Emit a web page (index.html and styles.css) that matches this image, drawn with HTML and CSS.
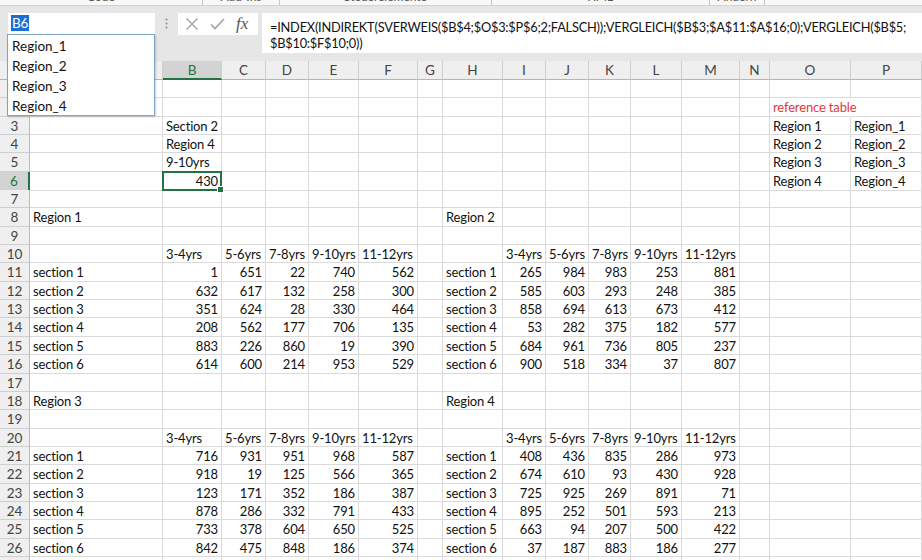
FILE: index.html
```html
<!DOCTYPE html>
<html>
<head>
<meta charset="utf-8">
<link rel="stylesheet" href="styles.css">
</head>
<body>
<div class="ribbon">
  <div class="grp g1">Code</div>
  <div class="grp g2">Add-Ins</div>
  <div class="grp g3">Steuerelemente</div>
  <div class="grp g4">XML</div>
  <div class="grp g5">Ändern</div>
</div>
<div class="fbar">
  <div class="namebox"><span class="sel">B6</span></div>
  <div class="dots"><svg width="3" height="11" viewBox="0 0 3 11"><circle cx="1.5" cy="1.5" r="1" fill="#8a8a8a"/><circle cx="1.5" cy="5.5" r="1" fill="#8a8a8a"/><circle cx="1.5" cy="9.5" r="1" fill="#8a8a8a"/></svg></div>
  <div class="tools">
    <svg class="ico" width="14" height="14" viewBox="0 0 14 14"><path d="M1.5 1.5 L12.5 12.5 M12.5 1.5 L1.5 12.5" stroke="#a3a3a3" stroke-width="1.4" fill="none"/></svg>
    <svg class="ico" width="15" height="12" viewBox="0 0 15 12"><path d="M1 6.5 L5 10.5 L14 1" stroke="#a3a3a3" stroke-width="1.6" fill="none"/></svg>
    <span class="fx">fx</span>
  </div>
  <div class="formula">=INDEX(INDIREKT(SVERWEIS($B$4;$O$3:$P$6;2;FALSCH));VERGLEICH($B$3;$A$11:$A$16;0);VERGLEICH($B$5;<br>$B$10:$F$10;0))</div>
</div>
<div class="sheet">
  <div class="r hd"><span></span><span>A</span><span class="hl">B</span><span>C</span><span>D</span><span>E</span><span>F</span><span>G</span><span>H</span><span>I</span><span>J</span><span>K</span><span>L</span><span>M</span><span>N</span><span>O</span><span>P</span></div>
  <div class="r"><span></span><span></span><span></span><span></span><span></span><span></span><span></span><span></span><span></span><span></span><span></span><span></span><span></span><span></span><span></span><span></span><span></span></div>
  <div class="r"><span></span><span></span><span></span><span></span><span></span><span></span><span></span><span></span><span></span><span></span><span></span><span></span><span></span><span></span><span></span><span class="ov red">reference table</span><span></span></div>
  <div class="r"><span>3</span><span></span><span>Section 2</span><span></span><span></span><span></span><span></span><span></span><span></span><span></span><span></span><span></span><span></span><span></span><span></span><span>Region 1</span><span>Region_1</span></div>
  <div class="r"><span>4</span><span></span><span>Region 4</span><span></span><span></span><span></span><span></span><span></span><span></span><span></span><span></span><span></span><span></span><span></span><span></span><span>Region 2</span><span>Region_2</span></div>
  <div class="r"><span>5</span><span></span><span>9-10yrs</span><span></span><span></span><span></span><span></span><span></span><span></span><span></span><span></span><span></span><span></span><span></span><span></span><span>Region 3</span><span>Region_3</span></div>
  <div class="r"><span class="rh">6</span><span></span><span class="n cur">430</span><span></span><span></span><span></span><span></span><span></span><span></span><span></span><span></span><span></span><span></span><span></span><span></span><span>Region 4</span><span>Region_4</span></div>
  <div class="r"><span>7</span><span></span><span></span><span></span><span></span><span></span><span></span><span></span><span></span><span></span><span></span><span></span><span></span><span></span><span></span><span></span><span></span></div>
  <div class="r"><span>8</span><span>Region 1</span><span></span><span></span><span></span><span></span><span></span><span></span><span>Region 2</span><span></span><span></span><span></span><span></span><span></span><span></span><span></span><span></span></div>
  <div class="r"><span>9</span><span></span><span></span><span></span><span></span><span></span><span></span><span></span><span></span><span></span><span></span><span></span><span></span><span></span><span></span><span></span><span></span></div>
  <div class="r"><span>10</span><span></span><span>3-4yrs</span><span>5-6yrs</span><span>7-8yrs</span><span>9-10yrs</span><span>11-12yrs</span><span></span><span></span><span>3-4yrs</span><span>5-6yrs</span><span>7-8yrs</span><span>9-10yrs</span><span>11-12yrs</span><span></span><span></span><span></span></div>
  <div class="r"><span>11</span><span>section 1</span><span class="n">1</span><span class="n">651</span><span class="n">22</span><span class="n">740</span><span class="n">562</span><span></span><span>section 1</span><span class="n">265</span><span class="n">984</span><span class="n">983</span><span class="n">253</span><span class="n">881</span><span></span><span></span><span></span></div>
  <div class="r"><span>12</span><span>section 2</span><span class="n">632</span><span class="n">617</span><span class="n">132</span><span class="n">258</span><span class="n">300</span><span></span><span>section 2</span><span class="n">585</span><span class="n">603</span><span class="n">293</span><span class="n">248</span><span class="n">385</span><span></span><span></span><span></span></div>
  <div class="r"><span>13</span><span>section 3</span><span class="n">351</span><span class="n">624</span><span class="n">28</span><span class="n">330</span><span class="n">464</span><span></span><span>section 3</span><span class="n">858</span><span class="n">694</span><span class="n">613</span><span class="n">673</span><span class="n">412</span><span></span><span></span><span></span></div>
  <div class="r"><span>14</span><span>section 4</span><span class="n">208</span><span class="n">562</span><span class="n">177</span><span class="n">706</span><span class="n">135</span><span></span><span>section 4</span><span class="n">53</span><span class="n">282</span><span class="n">375</span><span class="n">182</span><span class="n">577</span><span></span><span></span><span></span></div>
  <div class="r"><span>15</span><span>section 5</span><span class="n">883</span><span class="n">226</span><span class="n">860</span><span class="n">19</span><span class="n">390</span><span></span><span>section 5</span><span class="n">684</span><span class="n">961</span><span class="n">736</span><span class="n">805</span><span class="n">237</span><span></span><span></span><span></span></div>
  <div class="r"><span>16</span><span>section 6</span><span class="n">614</span><span class="n">600</span><span class="n">214</span><span class="n">953</span><span class="n">529</span><span></span><span>section 6</span><span class="n">900</span><span class="n">518</span><span class="n">334</span><span class="n">37</span><span class="n">807</span><span></span><span></span><span></span></div>
  <div class="r"><span>17</span><span></span><span></span><span></span><span></span><span></span><span></span><span></span><span></span><span></span><span></span><span></span><span></span><span></span><span></span><span></span><span></span></div>
  <div class="r"><span>18</span><span>Region 3</span><span></span><span></span><span></span><span></span><span></span><span></span><span>Region 4</span><span></span><span></span><span></span><span></span><span></span><span></span><span></span><span></span></div>
  <div class="r"><span>19</span><span></span><span></span><span></span><span></span><span></span><span></span><span></span><span></span><span></span><span></span><span></span><span></span><span></span><span></span><span></span><span></span></div>
  <div class="r"><span>20</span><span></span><span>3-4yrs</span><span>5-6yrs</span><span>7-8yrs</span><span>9-10yrs</span><span>11-12yrs</span><span></span><span></span><span>3-4yrs</span><span>5-6yrs</span><span>7-8yrs</span><span>9-10yrs</span><span>11-12yrs</span><span></span><span></span><span></span></div>
  <div class="r"><span>21</span><span>section 1</span><span class="n">716</span><span class="n">931</span><span class="n">951</span><span class="n">968</span><span class="n">587</span><span></span><span>section 1</span><span class="n">408</span><span class="n">436</span><span class="n">835</span><span class="n">286</span><span class="n">973</span><span></span><span></span><span></span></div>
  <div class="r"><span>22</span><span>section 2</span><span class="n">918</span><span class="n">19</span><span class="n">125</span><span class="n">566</span><span class="n">365</span><span></span><span>section 2</span><span class="n">674</span><span class="n">610</span><span class="n">93</span><span class="n">430</span><span class="n">928</span><span></span><span></span><span></span></div>
  <div class="r"><span>23</span><span>section 3</span><span class="n">123</span><span class="n">171</span><span class="n">352</span><span class="n">186</span><span class="n">387</span><span></span><span>section 3</span><span class="n">725</span><span class="n">925</span><span class="n">269</span><span class="n">891</span><span class="n">71</span><span></span><span></span><span></span></div>
  <div class="r"><span>24</span><span>section 4</span><span class="n">878</span><span class="n">286</span><span class="n">332</span><span class="n">791</span><span class="n">433</span><span></span><span>section 4</span><span class="n">895</span><span class="n">252</span><span class="n">501</span><span class="n">593</span><span class="n">213</span><span></span><span></span><span></span></div>
  <div class="r"><span>25</span><span>section 5</span><span class="n">733</span><span class="n">378</span><span class="n">604</span><span class="n">650</span><span class="n">525</span><span></span><span>section 5</span><span class="n">663</span><span class="n">94</span><span class="n">207</span><span class="n">500</span><span class="n">422</span><span></span><span></span><span></span></div>
  <div class="r"><span>26</span><span>section 6</span><span class="n">842</span><span class="n">475</span><span class="n">848</span><span class="n">186</span><span class="n">374</span><span></span><span>section 6</span><span class="n">37</span><span class="n">187</span><span class="n">883</span><span class="n">186</span><span class="n">277</span><span></span><span></span><span></span></div>
  <div class="r"><span>27</span><span></span><span></span><span></span><span></span><span></span><span></span><span></span><span></span><span></span><span></span><span></span><span></span><span></span><span></span><span></span><span></span></div>
</div>
<div class="dropdown">
  <div class="item">Region_1</div>
  <div class="item">Region_2</div>
  <div class="item">Region_3</div>
  <div class="item">Region_4</div>
</div>
</body>
</html>
```

FILE: styles.css
```css
* { box-sizing: border-box; }
html, body { margin: 0; padding: 0; }
body {
  width: 922px;
  height: 560px;
  overflow: hidden;
  position: relative;
  background: #fff;
  color: #111;
  font-family: Lato, "Open Sans", sans-serif;
  font-size: 13px;
  letter-spacing: -0.15px;
}

/* ribbon group labels (cut off at top) */
.ribbon {
  height: 6px;
  overflow: hidden;
  display: flex;
  background: #f8f8f8;
  border-bottom: 1px solid #d2d2d2;
  font-size: 12px;
  color: #555;
  letter-spacing: 0;
}
.grp {
  height: 6px;
  text-align: center;
  line-height: 12px;
  border-right: 1px solid #c6c6c6;
  overflow: visible;
}
.grp::before { content: ""; display: block; margin-top: -9px; }
.g1 { width: 203px; }
.g2 { width: 77px; }
.g3 { width: 212px; }
.g4 { width: 218px; }
.g5 { width: 55px; }

/* formula bar */
.fbar {
  height: 55px;
  background: #e6e6e6;
  display: flex;
  align-items: flex-start;
  padding-top: 7px;
}
.namebox {
  margin-left: 8px;
  width: 147px;
  height: 21px;
  background: #fff;
  padding: 2px 3px;
  line-height: 17px;
  font-size: 13.5px;
}
.sel {
  background: #1a6fd1;
  color: #fff;
  padding: 0 1px;
}
.dots {
  width: 23px;
  height: 21px;
  display: flex;
  align-items: center;
  justify-content: center;
}
.tools {
  width: 80px;
  height: 22px;
  background: #fff;
  display: flex;
  align-items: center;
  padding-left: 7px;
  gap: 11px;
}
.fx {
  font-family: "Liberation Serif", serif;
  font-style: italic;
  font-size: 17px;
  color: #555;
  letter-spacing: 0;
}
.formula {
  margin-left: 4px;
  flex: 1;
  height: 40px;
  background: #fff;
  padding: 6px 8px 0;
  line-height: 16px;
  font-size: 12.8px;
  letter-spacing: -0.22px;
  white-space: nowrap;
  overflow: hidden;
}

/* sheet */
.r {
  display: grid;
  grid-template-columns: 30px 133px 59px 44px 43px 50px 59px 25px 60px 43px 43px 42px 51px 58px 30px 81px 71px;
  height: 18.35px;
}
.r > span {
  border-right: 1px solid #dadada;
  border-bottom: 1px solid #dadada;
  padding: 0 3px;
  line-height: 18px;
  white-space: nowrap;
  overflow: hidden;
}
.r > span:first-child {
  background: #efefef;
  color: #444;
  text-align: center;
  padding: 0;
  border-right: 1px solid #bcbcbc;
  border-bottom-color: #cfcfcf;
  font-size: 13.5px;
  letter-spacing: 0;
}
.r.hd { height: 19px; }
.r.hd > span {
  background: #efefef;
  color: #444;
  text-align: center;
  border-right-color: #cdcdcd;
  border-bottom: 1px solid #b5b5b5;
  font-size: 13.5px;
  letter-spacing: 0;
}
.r.hd > span.hl {
  background: #d3d3d3;
  color: #217346;
  border-bottom: 2px solid #217346;
}
.r > span.rh {
  background: #d3d3d3;
  color: #217346;
  border-right: 2px solid #217346;
}
.n { text-align: right; }
.red { color: #e0393e; }
.ov {
  overflow: visible !important;
  border-right-color: transparent !important;
  position: relative;
  z-index: 1;
}
.cur {
  position: relative;
  overflow: visible !important;
}
.cur::after {
  content: "";
  position: absolute;
  left: -1px;
  top: -1px;
  right: -1px;
  bottom: -1px;
  border: 2px solid #217346;
}
.cur::before {
  content: "";
  position: absolute;
  right: -3px;
  bottom: -3px;
  width: 5px;
  height: 5px;
  background: #217346;
  border: 1px solid #fff;
  z-index: 2;
}

/* name box dropdown */
.dropdown {
  position: absolute;
  left: 7px;
  top: 34px;
  width: 148px;
  height: 82px;
  background: #fff;
  border: 1px solid #7ea4c8;
  box-shadow: 1px 1px 2px rgba(0,0,0,0.18);
  z-index: 5;
  padding-top: 1px;
  font-size: 13.5px;
  letter-spacing: 0;
}
.item {
  height: 20px;
  line-height: 20px;
  padding-left: 4px;
}
```
